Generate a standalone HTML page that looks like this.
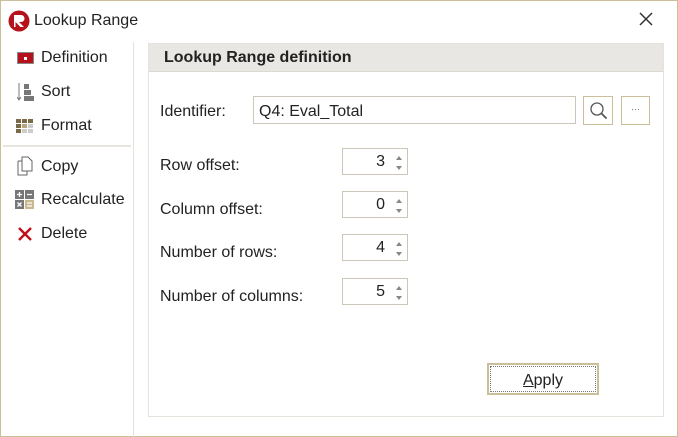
<!DOCTYPE html>
<html><head><style>
*{margin:0;padding:0;box-sizing:border-box}
body{width:678px;height:437px;background:#fff;font-family:"Liberation Sans",sans-serif;font-size:16px;color:#222;position:relative;overflow:hidden}
.win{position:absolute;left:0;top:0;width:678px;height:437px;border:1px solid #cbbf9a}
.a{position:absolute;white-space:nowrap}
.lbl{position:absolute;left:160px}
.spin{position:absolute;left:342px;width:66px;height:27px;border:1px solid #ccc6b8;background:#fff}
.spin span{position:absolute;right:22px;top:4px}
.spin i{position:absolute;right:5px;width:0;height:0;border-left:3px solid transparent;border-right:3px solid transparent}
</style></head><body>
<div class="win"></div>
<svg class="a" style="left:8px;top:10px" width="22" height="22" viewBox="0 0 22 22"><circle cx="11" cy="11" r="10.5" fill="#b5121b"/><path d="M6 5h7a3.5 3.5 0 0 1 0 7h-2l5 5h-3.5l-5-5V17H6z" fill="#fff"/></svg>
<div class="a" style="left:34px;top:12px;font-size:16px">Lookup Range</div>
<svg class="a" style="left:639px;top:12px" width="14" height="14"><path d="M1 1L13 13M13 1L1 13" stroke="#333" stroke-width="1.5"/></svg>
<div class="a" style="left:133px;top:42px;width:1px;height:395px;background:#e4e1da"></div>
<div class="a" style="left:3px;top:145px;width:128px;height:2px;background:#e8e5de"></div>
<div class="a" style="left:17px;top:52px;width:17px;height:12px;background:#b5121b;border:1px solid #888"><div style="position:absolute;left:6px;top:4px;width:3px;height:3px;background:#fff"></div></div>
<div class="a" style="left:41px;top:49px">Definition</div>
<svg class="a" style="left:17px;top:82px" width="18" height="20"><path d="M2 1v17M0 15l2 3 2-3" stroke="#777" stroke-width="1" fill="none"/><rect x="7" y="2" width="5" height="5" fill="#777"/><rect x="7" y="8" width="7" height="5" fill="#777"/><rect x="7" y="14" width="10" height="5" fill="#777"/></svg>
<div class="a" style="left:41px;top:83px">Sort</div>
<svg class="a" style="left:16px;top:119px" width="20" height="14"><g fill="#7a6a45"><rect x="0" y="0" width="5" height="4"/><rect x="6" y="0" width="5" height="4"/><rect x="12" y="0" width="5" height="4"/><rect x="0" y="5" width="5" height="4"/><rect x="6" y="5" width="5" height="4" fill="#b8a77a"/><rect x="12" y="5" width="5" height="4" fill="#ccc"/><rect x="0" y="10" width="5" height="4"/><rect x="6" y="10" width="5" height="4" fill="#ccc"/><rect x="12" y="10" width="5" height="4" fill="#ccc"/></g></svg>
<div class="a" style="left:41px;top:117px">Format</div>
<svg class="a" style="left:16px;top:156px" width="18" height="20"><path d="M6 1h6l4 4v10H6z M2 5h4 M2 5v14h9v-4" stroke="#666" fill="none"/></svg>
<div class="a" style="left:41px;top:158px">Copy</div>
<svg class="a" style="left:15px;top:190px" width="20" height="20"><rect x="0" y="0" width="9" height="9" fill="#777"/><rect x="10" y="0" width="9" height="9" fill="#777"/><rect x="0" y="10" width="9" height="9" fill="#777"/><rect x="10" y="10" width="9" height="9" fill="#c8b98e"/><path d="M4.5 2v5M2 4.5h5M12 4.5h5M2.5 12.5l4 4M6.5 12.5l-4 4M12 13h5M12 16h5" stroke="#fff" stroke-width="1.3"/></svg>
<div class="a" style="left:41px;top:191px">Recalculate</div>
<svg class="a" style="left:18px;top:227px" width="14" height="14"><path d="M1 1L13 13M13 1L1 13" stroke="#c0101a" stroke-width="2.4"/></svg>
<div class="a" style="left:41px;top:225px">Delete</div>
<div class="a" style="left:148px;top:43px;width:516px;height:374px;border:1px solid #e6e3dc"></div>
<div class="a" style="left:149px;top:44px;width:514px;height:28px;background:#e9e7e3;border-bottom:1px solid #ddd9cf"></div>
<div class="a" style="left:164px;top:49px;font-weight:bold;font-size:16px">Lookup Range definition</div>
<div class="lbl" style="top:103px">Identifier:</div>
<div class="a" style="left:253px;top:96px;width:323px;height:28px;border:1px solid #ccc6b8"></div>
<div class="a" style="left:259px;top:103px">Q4: Eval_Total</div>
<div class="a" style="left:583px;top:96px;width:30px;height:29px;border:1px solid #cbbf9a"></div>
<svg class="a" style="left:589px;top:101px" width="20" height="20"><circle cx="8" cy="8" r="6" stroke="#555" stroke-width="1.3" fill="none"/><path d="M12.5 12.5l5 5" stroke="#555" stroke-width="1.8"/></svg>
<div class="a" style="left:621px;top:96px;width:29px;height:29px;border:1px solid #cbbf9a;font-size:9px;text-align:center;line-height:24px;color:#666">···</div>
<div class="lbl" style="top:157px">Row offset:</div>
<div class="spin" style="top:148px"><span>3</span><i style="top:7px;border-bottom:4px solid #888"></i><i style="top:17px;border-top:4px solid #888"></i></div>
<div class="lbl" style="top:201px">Column offset:</div>
<div class="spin" style="top:191px"><span>0</span><i style="top:7px;border-bottom:4px solid #888"></i><i style="top:17px;border-top:4px solid #888"></i></div>
<div class="lbl" style="top:244px">Number of rows:</div>
<div class="spin" style="top:234px"><span>4</span><i style="top:7px;border-bottom:4px solid #888"></i><i style="top:17px;border-top:4px solid #888"></i></div>
<div class="lbl" style="top:288px">Number of columns:</div>
<div class="spin" style="top:278px"><span>5</span><i style="top:7px;border-bottom:4px solid #888"></i><i style="top:17px;border-top:4px solid #888"></i></div>
<div class="a" style="left:487px;top:363px;width:112px;height:32px;border:2px solid #cbbf9a;background:#fff"><div style="position:absolute;inset:1px;border:1px dotted #777;text-align:center;line-height:28px;font-size:16px"><u>A</u>pply</div></div>
</body></html>
